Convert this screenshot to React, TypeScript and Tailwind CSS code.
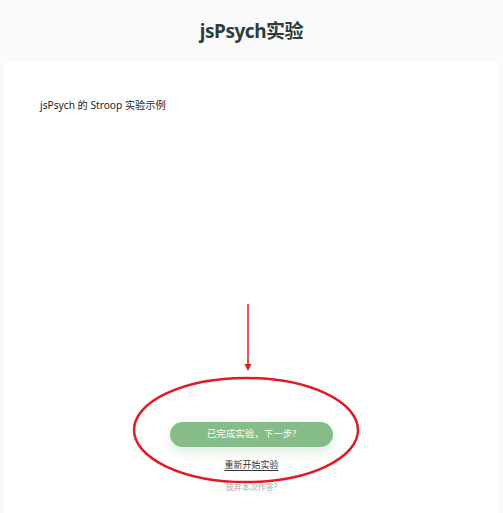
export default function App() {
  return (
    <div
      className="relative h-[513px] w-[503px] overflow-hidden bg-[#fafafa] flex flex-col"
      style={{ fontFamily: '"Noto Sans", "Noto Sans CJK SC", sans-serif' }}
    >
      {/* Header */}
      <div className="h-[62px] flex items-center justify-center">
        <h1 className="text-[19px] font-bold text-[#2c3e3a] tracking-tight">jsPsych实验</h1>
      </div>

      {/* Card */}
      <div className="mx-[4px] flex-1 bg-white flex flex-col">
        <p className="mt-[36px] ml-[36px] text-[10.2px] text-[#222]">jsPsych 的 Stroop 实验示例</p>

        <div className="mt-auto mb-[20px] flex flex-col items-center">
          <button className="w-[163px] h-[25px] rounded-full bg-[#86bb8a] text-white text-[9.5px] shadow-[0_6px_12px_rgba(134,187,138,0.25)]">
            已完成实验，下一步?
          </button>
          <a className="mt-[11px] text-[9px] text-[#333] underline underline-offset-2">重新开始实验</a>
          <span className="mt-[10px] text-[8px] text-[#aaa]">放弃本次作答?</span>
        </div>
      </div>

      {/* Annotation overlay */}
      <svg className="absolute left-0 top-0 pointer-events-none" width="503" height="513">
        <line x1="248" y1="304" x2="248" y2="366" stroke="#e01b24" strokeWidth="1.5" />
        <polygon points="244.5,364 251.5,364 248,371" fill="#e01b24" />
        <ellipse cx="246" cy="430" rx="112" ry="52" fill="none" stroke="#e01b24" strokeWidth="2.5" />
      </svg>
    </div>
  );
}
